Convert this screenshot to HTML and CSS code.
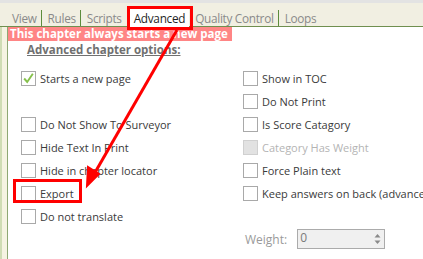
FILE: index.html
```html
<!DOCTYPE html>
<html lang="en">

<head>
    <meta charset="UTF-8">
    <title>Chapter options - Advanced</title>
    <link rel="stylesheet" href="styles.css">
</head>

<body>
    <div class="window">
        <div class="topstrip"></div>
        <ul class="tabs">
            <li class="tab">View</li>
            <li class="tab">Rules</li>
            <li class="tab plain">Scripts</li>
            <li class="tab active">Advanced</li>
            <li class="tab">Quality Control</li>
            <li class="tab plain">Loops</li>
        </ul>
        <div class="main">
            <div class="side"></div>
            <div class="content">
                <div class="banner">This chapter always starts a new page</div>
                <h4 class="heading">Advanced chapter options:</h4>
                <div class="options">
                    <label class="opt"><span class="box checked"><svg viewBox="0 0 15 15" width="13" height="13"><polyline points="2.5,7.5 6,11.5 12.5,2" fill="none" stroke="#86c04c" stroke-width="2.2"/></svg></span>Starts a new page</label>
                    <label class="opt"><span class="box"></span>Show in TOC</label>
                    <div></div>
                    <label class="opt"><span class="box"></span>Do Not Print</label>
                    <label class="opt"><span class="box"></span>Do Not Show To Surveyor</label>
                    <label class="opt"><span class="box"></span>Is Score Catagory</label>
                    <label class="opt"><span class="box"></span>Hide Text In Print</label>
                    <label class="opt disabled"><span class="box"></span>Category Has Weight</label>
                    <label class="opt"><span class="box"></span>Hide in chapter locator</label>
                    <label class="opt"><span class="box"></span>Force Plain text</label>
                    <label class="opt"><span class="box"></span>Export</label>
                    <label class="opt"><span class="box"></span>Keep answers on back (advanced)</label>
                    <label class="opt"><span class="box"></span>Do not translate</label>
                    <div></div>
                </div>
                <div class="weight">
                    <span class="weight-label">Weight:</span>
                    <div class="spinner">
                        <span>0</span>
                        <div class="arrows">
                            <svg viewBox="0 0 9 14" width="9" height="14"><path d="M4.5 2 L7.5 5.5 L1.5 5.5 Z" fill="#8a8a8a"/><path d="M4.5 12 L7.5 8.5 L1.5 8.5 Z" fill="#8a8a8a"/></svg>
                        </div>
                    </div>
                </div>
            </div>
        </div>

        <!-- annotation drawn over the screenshot -->
        <div class="mark mark-tab"></div>
        <div class="mark mark-export"></div>
        <svg class="arrow" width="423" height="259" viewBox="0 0 423 259">
            <line x1="177" y1="30" x2="93" y2="176" stroke="#ff0000" stroke-width="3"/>
            <path d="M87 186 L88 167 L99 174 Z" fill="#ff0000" stroke="#ff0000" stroke-width="2"/>
        </svg>
    </div>
</body>

</html>
```

FILE: styles.css
```css
* {
    margin: 0;
    padding: 0;
    box-sizing: border-box;
}

body {
    background-color: white;
    font-family: "Open Sans", "DejaVu Sans", sans-serif;
    font-size: 12px;
    overflow: hidden;
}

.window {
    position: relative;
    width: 423px;
    height: 259px;
    overflow: hidden;
}

.topstrip {
    height: 3px;
    background-color: #e3e3e3;
}

.tabs {
    height: 24px;
    display: flex;
    align-items: flex-end;
    list-style: none;
    background-color: #f1efe2;
    border-bottom: 1px solid #6f8f4f;
    padding-left: 12px;
}

.tab {
    color: #8a8a8a;
    font-size: 11.8px;
    letter-spacing: -0.3px;
    line-height: 16px;
    padding-right: 4px;
    border-right: 1px solid #5c8c3c;
    margin-bottom: 0;
    margin-right: 6px;
}

.tab.plain {
    border-right: none;
    padding-right: 0;
}

.tab.active {
    background-color: white;
    color: #1f1f1f;
    margin-bottom: -1px;
    line-height: 18px;
    padding: 1px 4px 0 4px;
    margin-left: 2px;
    border-right: none;
}

.main {
    display: flex;
    height: 232px;
}

.side {
    width: 8px;
    flex-shrink: 0;
    background-color: #f5f3e2;
    border-left: 2px solid #cfdcb4;
    border-right: 1px solid #8ea874;
}

.content {
    flex: 1;
    min-width: 0;
}

.banner {
    width: 224px;
    height: 14px;
    background-color: #ff8585;
    color: white;
    font-weight: bold;
    font-size: 11.5px;
    line-height: 14px;
    padding-left: 2px;
    white-space: nowrap;
    overflow: hidden;
}

.heading {
    color: #707070;
    font-size: 11.5px;
    text-decoration: underline;
    margin-left: 19px;
    margin-top: 1px;
    line-height: 16px;
}

.options {
    display: grid;
    grid-template-columns: 222px 1fr;
    grid-auto-rows: 23px;
    margin-top: 12px;
    padding-left: 13px;
}

.opt {
    display: flex;
    align-items: center;
    gap: 4px;
    color: #3a3a3a;
    font-size: 11px;
    white-space: nowrap;
    height: 16px;
}

.box {
    width: 15px;
    height: 15px;
    border: 1px solid #a9a9a9;
    background-color: white;
    display: flex;
    align-items: center;
    justify-content: center;
    flex-shrink: 0;
}

.opt.disabled {
    color: #b4b4b4;
}

.opt.disabled .box {
    background-color: #e2e2e2;
    border-color: #d0d0d0;
}

.weight {
    display: flex;
    align-items: center;
    margin-left: 237px;
    margin-top: -2px;
    gap: 10px;
}

.weight-label {
    color: #9a9a9a;
    font-size: 12px;
}

.spinner {
    width: 88px;
    height: 20px;
    border: 1px solid #ababab;
    background-color: #f0f0f0;
    display: flex;
    justify-content: space-between;
    padding-left: 2px;
    color: #7a7a7a;
    line-height: 16px;
}

.arrows {
    padding-right: 2px;
    padding-top: 2px;
}

.mark {
    position: absolute;
    border: 3px solid #ff0000;
}

.mark-tab {
    left: 127px;
    top: 6px;
    width: 66px;
    height: 24px;
}

.mark-export {
    left: 13px;
    top: 179px;
    width: 69px;
    height: 24px;
}

.arrow {
    position: absolute;
    left: 0;
    top: 0;
}
```
